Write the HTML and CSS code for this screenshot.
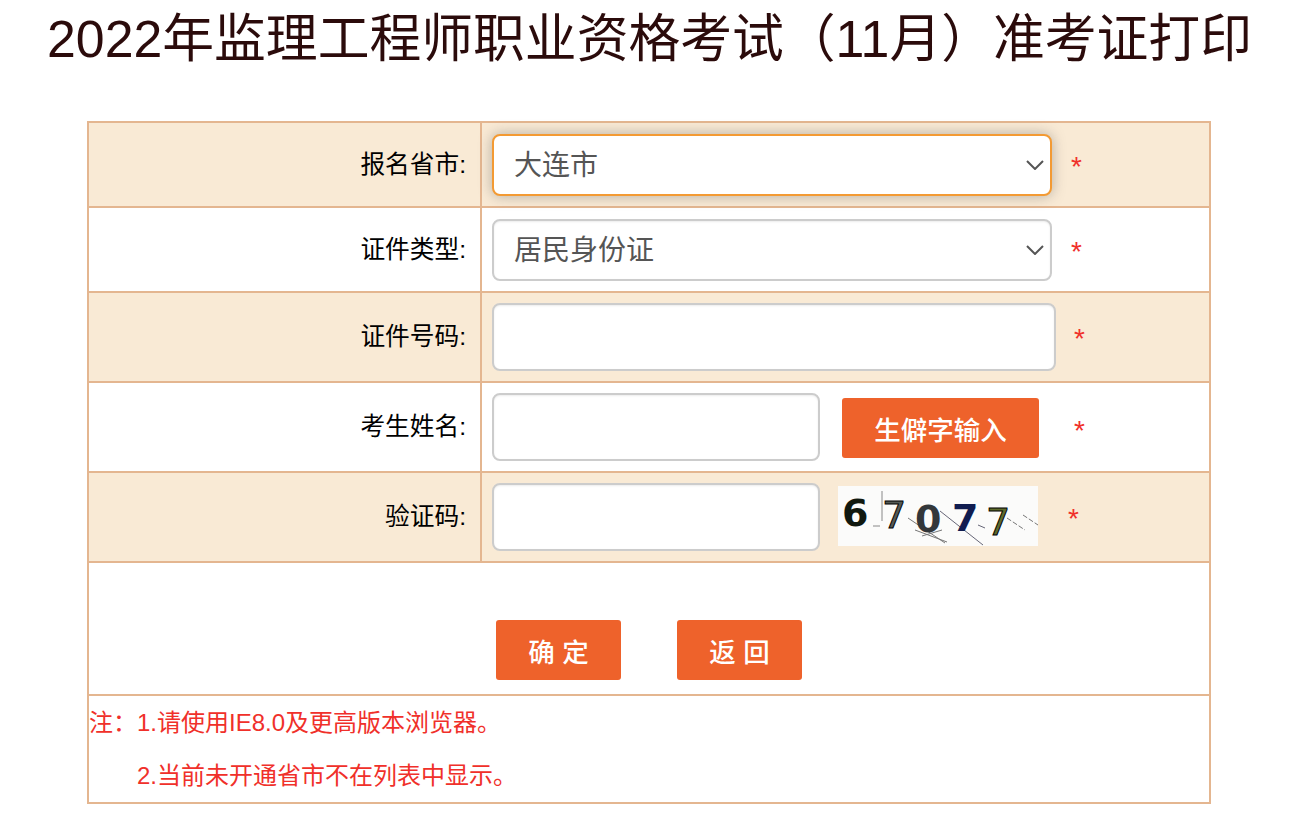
FILE: index.html
```html
<!DOCTYPE html>
<html lang="zh-CN">
  <head>
    <meta charset="UTF-8" />
    <title>准考证打印</title>
    <link rel="stylesheet" href="styles.css">
  </head>
  <body>
    <h1 class="title">2022年监理工程师职业资格考试（11月）准考证打印</h1>
    <form class="print-form">
      <table class="form-table">
        <colgroup>
          <col class="col-label">
          <col class="col-field">
        </colgroup>
        <tr class="row row-a shaded">
          <th>报名省市:</th>
          <td>
            <div class="field">
              <div class="select focused">
                <span>大连市</span>
                <svg class="chevron" viewBox="0 0 18 10"><path d="M1 1l8 8 8-8" /></svg>
              </div>
              <span class="star star-select">*</span>
            </div>
          </td>
        </tr>
        <tr class="row row-a">
          <th>证件类型:</th>
          <td>
            <div class="field">
              <div class="select">
                <span>居民身份证</span>
                <svg class="chevron" viewBox="0 0 18 10"><path d="M1 1l8 8 8-8" /></svg>
              </div>
              <span class="star star-select">*</span>
            </div>
          </td>
        </tr>
        <tr class="row row-b shaded">
          <th>证件号码:</th>
          <td>
            <div class="field">
              <input class="input input-wide" type="text">
              <span class="star star-wide">*</span>
            </div>
          </td>
        </tr>
        <tr class="row row-b">
          <th>考生姓名:</th>
          <td>
            <div class="field">
              <input class="input input-short" type="text">
              <button class="btn btn-rare" type="button">生僻字输入</button>
              <span class="star star-rare">*</span>
            </div>
          </td>
        </tr>
        <tr class="row row-b shaded">
          <th>验证码:</th>
          <td>
            <div class="field">
              <input class="input input-short" type="text">
              <svg class="captcha" viewBox="0 0 200 60">
                <rect width="200" height="60" fill="#fbfbfa" />
                <g fill="none" stroke-width="1">
                  <path d="M44 5v30M35 40h7" stroke="#888" />
                  <path d="M70 32l37 25M77 44l32 12M84 50l20-6" stroke="#777" />
                  <path d="M102 25l43 34M140 39l7 3" stroke="#667" />
                  <path d="M169 32l18 12M185 29l15 10" stroke="#777" stroke-dasharray="5 2" />
                </g>
                <text class="digit" x="4" y="40" fill="#10180f">6</text>
                <text class="digit thin" x="44" y="42" fill="#555a55">7</text>
                <text class="digit" x="77" y="46" fill="#33373a">0</text>
                <text class="digit" x="114" y="45" fill="#101c50">7</text>
                <text class="digit thin" x="148" y="49" fill="#5f6b2c">7</text>
              </svg>
              <span class="star star-code">*</span>
            </div>
          </td>
        </tr>
        <tr class="row-actions">
          <td colspan="2">
            <div class="actions">
              <button class="btn btn-action" type="button">确 定</button>
              <button class="btn btn-action" type="button">返 回</button>
            </div>
          </td>
        </tr>
        <tr class="row-notes">
          <td colspan="2">
            <p class="note">注：1.请使用IE8.0及更高版本浏览器。</p>
            <p class="note note-indent">2.当前未开通省市不在列表中显示。</p>
          </td>
        </tr>
      </table>
    </form>
  </body>
</html>
```

FILE: styles.css
```css
* {
  box-sizing: border-box;
}
body {
  margin: 0;
  background: #fff;
  font-family: "Liberation Sans", "Noto Sans CJK SC", sans-serif;
}
.title {
  margin: 0;
  padding: 9px 0 0 9px;
  height: 121px;
  font-size: 51.8px;
  line-height: 60px;
  font-weight: 400;
  color: #2b0b0b;
  text-align: center;
  white-space: nowrap;
}
.print-form {
  padding-left: 87px;
}
.form-table {
  width: 1124px;
  table-layout: fixed;
  border-collapse: collapse;
}
.form-table th,
.form-table td {
  border: 2px solid #e4b690;
  padding: 0;
}
.col-label {
  width: 393px;
}
.row-a {
  height: 85px;
}
.row-b {
  height: 90px;
}
.shaded {
  background: #f9ead5;
}
.row th {
  padding: 0 14px 6px 0;
  font-size: 24.7px;
  font-weight: 400;
  color: #000;
  text-align: right;
}
.row-a th {
  padding-bottom: 5px;
}
.field {
  display: flex;
  align-items: center;
  padding-left: 10px;
}
.select {
  display: flex;
  align-items: center;
  justify-content: space-between;
  width: 560px;
  height: 62px;
  padding: 0 6px 4px 20px;
  background: #fff;
  border: 2px solid #ccc;
  border-radius: 8px;
  box-shadow: inset 0 1px 2px rgba(0, 0, 0, 0.08);
  font-size: 28px;
  color: #555;
}
.select.focused {
  border-color: #f39a33;
  box-shadow: 0 0 14px rgba(80, 80, 80, 0.4);
}
.chevron {
  width: 18px;
  height: 10px;
  margin-top: 4px;
  fill: none;
  stroke: #555;
  stroke-width: 2;
}
.input {
  height: 68px;
  background: #fff;
  border: 2px solid #ccc;
  border-radius: 8px;
  box-shadow: inset 0 1px 2px rgba(0, 0, 0, 0.08);
}
.input-wide {
  width: 564px;
}
.input-short {
  width: 328px;
}
.star {
  margin-top: 4px;
  font-size: 28px;
  line-height: 28px;
  color: #f0302a;
}
.star-select {
  margin-left: 19px;
}
.star-wide {
  margin-left: 18px;
}
.star-rare {
  margin: 8px 0 0 35px;
}
.star-code {
  margin-left: 30px;
}
.btn {
  height: 60px;
  padding: 0;
  border: 0;
  border-radius: 3px;
  background: #ee622b;
  color: #fff;
  font-family: inherit;
  font-size: 26.5px;
  font-weight: 500;
}
.btn-rare {
  width: 197px;
  margin: 2px 0 0 22px;
}
.captcha {
  width: 200px;
  height: 60px;
  margin: 0 0 2px 18px;
}
.digit {
  font-family: "DejaVu Sans", sans-serif;
  font-size: 38px;
  font-weight: 700;
}
.digit.thin {
  font-weight: 400;
  stroke: currentColor;
}
.row-actions {
  height: 133px;
}
.actions {
  display: flex;
  gap: 56px;
  padding: 57px 0 14px 407px;
}
.btn-action {
  width: 125px;
}
.row-notes {
  height: 108px;
}
.note {
  margin: 0;
  font-size: 24px;
  line-height: 53px;
  color: #f0302a;
}
.note-indent {
  padding-left: 48px;
}
```
